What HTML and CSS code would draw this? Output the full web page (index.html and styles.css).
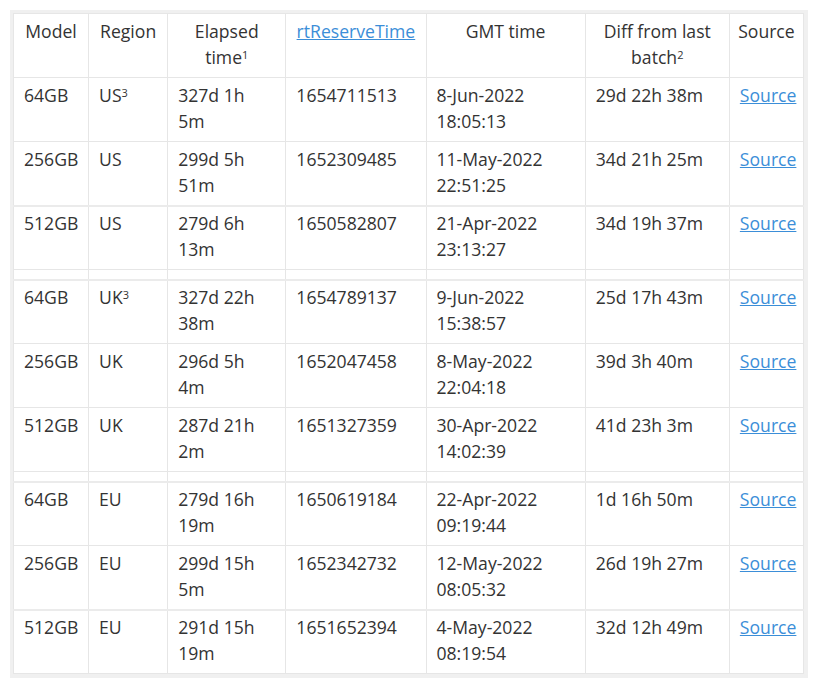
FILE: index.html
```html
<!DOCTYPE html>
<html lang="en">
<head>
<meta charset="utf-8">
<title>Batches</title>
<link rel="stylesheet" href="styles.css">
</head>
<body>
<div class="frame">
<table class="batches">
  <colgroup>
    <col class="c-model"><col class="c-region"><col class="c-elapsed"><col class="c-rt"><col class="c-gmt"><col class="c-diff"><col class="c-src">
  </colgroup>
  <thead>
    <tr>
      <th>Model</th>
      <th>Region</th>
      <th>Elapsed time<sup>1</sup></th>
      <th><a href="#">rtReserveTime</a></th>
      <th>GMT time</th>
      <th>Diff from last batch<sup>2</sup></th>
      <th>Source</th>
    </tr>
  </thead>
  <tbody>
    <tr><td>64GB</td><td>US<sup>3</sup></td><td>327d 1h 5m</td><td>1654711513</td><td>8-Jun-2022 18:05:13</td><td>29d 22h 38m</td><td><a href="#">Source</a></td></tr>
    <tr><td>256GB</td><td>US</td><td>299d 5h 51m</td><td>1652309485</td><td>11-May-2022 22:51:25</td><td>34d 21h 25m</td><td><a href="#">Source</a></td></tr>
    <tr class="thick"><td>512GB</td><td>US</td><td>279d 6h 13m</td><td>1650582807</td><td>21-Apr-2022 23:13:27</td><td>34d 19h 37m</td><td><a href="#">Source</a></td></tr>
    <tr class="spacer"><td></td><td></td><td></td><td></td><td></td><td></td><td></td></tr>
    <tr class="thick"><td>64GB</td><td>UK<sup>3</sup></td><td>327d 22h 38m</td><td>1654789137</td><td>9-Jun-2022 15:38:57</td><td>25d 17h 43m</td><td><a href="#">Source</a></td></tr>
    <tr><td>256GB</td><td>UK</td><td>296d 5h 4m</td><td>1652047458</td><td>8-May-2022 22:04:18</td><td>39d 3h 40m</td><td><a href="#">Source</a></td></tr>
    <tr><td>512GB</td><td>UK</td><td>287d 21h 2m</td><td>1651327359</td><td>30-Apr-2022 14:02:39</td><td>41d 23h 3m</td><td><a href="#">Source</a></td></tr>
    <tr class="spacer"><td></td><td></td><td></td><td></td><td></td><td></td><td></td></tr>
    <tr class="thick"><td>64GB</td><td>EU</td><td>279d 16h 19m</td><td>1650619184</td><td>22-Apr-2022 09:19:44</td><td>1d 16h 50m</td><td><a href="#">Source</a></td></tr>
    <tr><td>256GB</td><td>EU</td><td>299d 15h 5m</td><td>1652342732</td><td>12-May-2022 08:05:32</td><td>26d 19h 27m</td><td><a href="#">Source</a></td></tr>
    <tr class="thick"><td>512GB</td><td>EU</td><td>291d 15h 19m</td><td>1651652394</td><td>4-May-2022 08:19:54</td><td>32d 12h 49m</td><td><a href="#">Source</a></td></tr>
  </tbody>
</table>
</div>
</body>
</html>
```

FILE: styles.css
```css
html, body {
  margin: 0;
  background: #ffffff;
}
body {
  padding: 10px 0 0 10px;
  font-family: "Open Sans", "Noto Sans", sans-serif;
  font-size: 17.6px;
  color: #333333;
}
.frame {
  width: 791px;
  border: 3px solid #f0f0f0;
  border-right-width: 4px;
  border-bottom-width: 4px;
}
.batches {
  width: 791px;
  table-layout: fixed;
  border-collapse: collapse;
  border: 1px solid #e6e6e6;
}
.c-model { width: 75px; }
.c-region { width: 79px; }
.c-elapsed { width: 118px; }
.c-rt { width: 140px; }
.c-gmt { width: 159px; }
.c-diff { width: 144px; }
.c-src { width: 74px; }
.batches th,
.batches td {
  border: 1px solid #e6e6e6;
  padding: 4px 10px 7px 10px;
  line-height: 26px;
  height: 52px;
  vertical-align: top;
  text-align: left;
  font-weight: normal;
}
.batches th {
  text-align: center;
  padding-left: 6px;
  padding-right: 6px;
}
.batches tr.thick td {
  border-top: 2px solid #ebebeb;
  padding-top: 3px;
}
.batches tr.spacer td {
  height: 9px;
  padding: 0;
  line-height: 0;
}
.batches sup {
  font-size: 11px;
  line-height: 0;
  vertical-align: 5px;
}
.batches a {
  color: #3b8ed8;
  text-decoration: underline;
}
```
